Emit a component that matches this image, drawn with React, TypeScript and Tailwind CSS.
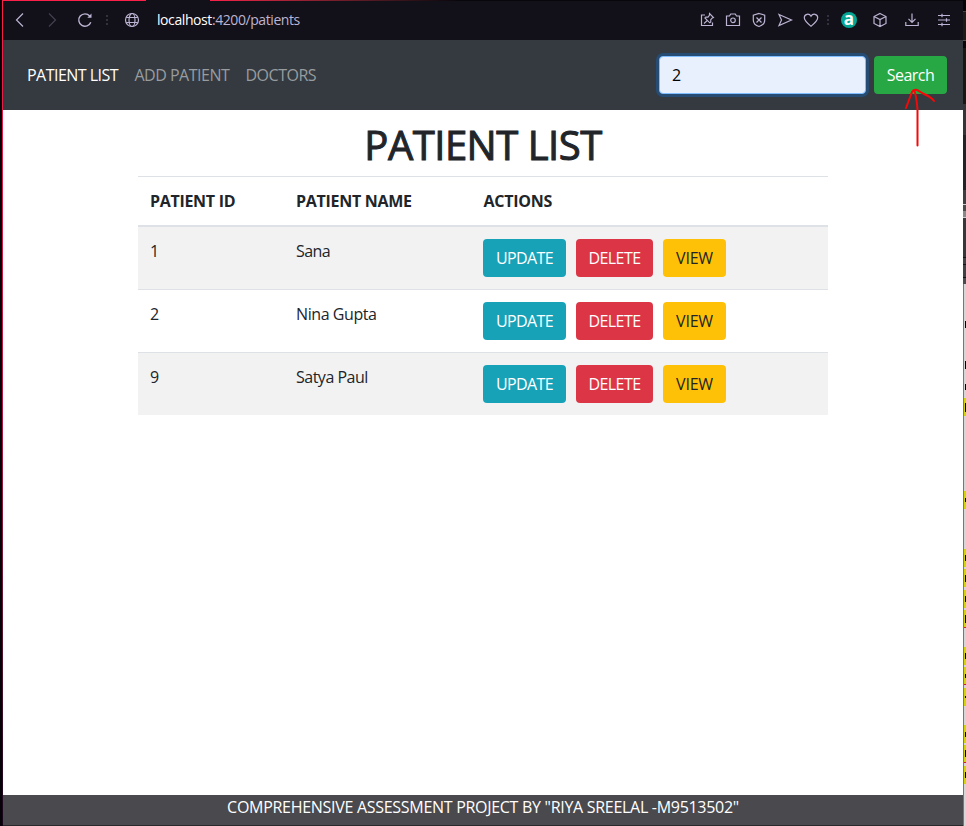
import React from "react";

const patients = [
  { id: "1", name: "Sana", track: "tracking-[-0.6px]" },
  { id: "2", name: "Nina Gupta", track: "tracking-[-0.42px]" },
  { id: "9", name: "Satya Paul", track: "tracking-[-0.5px]" },
];

function Icon({ className, children, w = 16 }: { className?: string; children: React.ReactNode; w?: number }) {
  return (
    <svg width={w} height="16" viewBox={`0 0 ${w} 16`} fill="none" stroke="currentColor" strokeWidth="1.2" className={`shrink-0 ${className ?? ""}`}>
      {children}
    </svg>
  );
}

function Dots({ className }: { className?: string }) {
  return (
    <span className={`flex w-[2px] shrink-0 flex-col gap-[2px] ${className ?? ""}`}>
      <i className="h-[2px] bg-[#34313f]" />
      <i className="h-[2px] bg-[#34313f]" />
      <i className="h-[2px] bg-[#34313f]" />
    </span>
  );
}

function BrowserBar() {
  return (
    <header className="flex h-10 items-center bg-[#121019] text-[#bcb4d2]">
      <Icon className="ml-[9px]"><path d="M11 1.500 4.500 8l6.500 6.500" /></Icon>
      <Icon className="ml-4 text-[#45424f]"><path d="m5 1.500 6.500 6.500L5 14.500" /></Icon>
      <Icon className="ml-[17px]">
        <path d="M13.800 10.200A6.200 6.200 0 1 1 12.700 4" strokeWidth="1.400" />
        <path d="M14.500 1.500v4.200h-4.200z" fill="currentColor" stroke="none" />
      </Icon>
      <Dots className="ml-[13px]" />
      <Icon className="ml-4">
        <circle cx="8" cy="8" r="6.500" />
        <ellipse cx="8" cy="8" rx="3" ry="6.500" />
        <path d="M2.200 5.500h11.600M2.200 10.500h11.600" />
      </Icon>
      <div className="ml-[17px] text-sm leading-5 tracking-[-0.42px] whitespace-nowrap">
        <span className="text-white">localhost</span>:4200/patients
      </div>
      <div className="ml-auto flex items-center">
        <Icon>
          <path d="M6 3H2.500v10.500h11V10.500" />
          <path strokeWidth="1.100" d="m10.500 1.500 4 4-1.200.5-1.600 1.800.1 2.200-1 .8L5.900 6l.9-1 2.200.1 1.400-1.800zM8.300 8.500 5 11.500" />
        </Icon>
        <Icon className="ml-[10px]">
          <path d="M1.500 4h3l1.200-2h4.600l1.200 2h3v9.500h-13z" />
          <circle cx="8" cy="8.300" r="2.300" />
        </Icon>
        <Icon className="ml-[10px]">
          <path d="m8 1.500 5.700 1.700v5C13.700 11.500 11 13.500 8 14.500c-3-1-5.700-3-5.700-6.300v-5z" />
          <path d="m5.500 5.500 5 5m0-5-5 5" />
        </Icon>
        <Icon className="ml-[10px]"><path d="M2 2.500 14.500 8 2 13.500 4.500 8z" /></Icon>
        <Icon className="ml-[10px]">
          <path d="M8 14.300C4.500 11.400 1.300 8.800 1.300 5.800 1.300 1.800 6.200 1 8 4.200c1.800-3.200 6.700-2.400 6.700 1.600C14.700 8.800 11.500 11.400 8 14.300z" />
        </Icon>
        <Dots className="ml-2" />
        <span className="ml-3 flex size-4 shrink-0 items-center justify-center rounded-full bg-[#04a595] pb-[3px] text-[17px] leading-none font-bold text-white">a</span>
        <Icon className="ml-[15px]">
          <path d="m8 1.500 6 3v7l-6 3-6-3v-7zM2 4.500l6 3 6-3M8 7.500v7" />
        </Icon>
        <Icon className="ml-4"><path d="M8 1.500v8.500M4.500 6.800 8 10.300l3.500-3.500M1.800 10v3.500h12.400V10" /></Icon>
        <Icon className="ml-4 mr-[11px]">
          <path d="M2 3.500h12M2 8h12M2 12.500h12M6 1.800v3.400M10.500 6.300v3.400M6 10.800v3.400" />
        </Icon>
      </div>
    </header>
  );
}

function NavBar() {
  return (
    <nav className="relative flex h-[70px] items-center bg-[#343a40] pl-6 pr-4 text-[#999c9f] whitespace-nowrap">
      <a className="w-[107.500px] text-white tracking-[-0.53px]">PATIENT LIST</a>
      <a className="w-[111px] tracking-[-0.5px]">ADD PATIENT</a>
      <a className="tracking-[-0.5px]">DOCTORS</a>
      <input
        readOnly
        value="2"
        className="ml-auto h-[38px] w-[207px] rounded border border-[#80bdff] bg-[#e8f0fe] px-3 text-black shadow-[0_0_0_3px_#264c74] outline-none"
      />
      <button className="ml-2 h-[38px] w-[73px] rounded bg-[#28a745] text-white tracking-[-0.55px]">Search</button>
      <svg className="absolute left-[900px] top-[46px] text-[#f50808]" width="34" height="64" viewBox="0 0 34 64" fill="none" stroke="currentColor" strokeWidth="2" strokeLinecap="round">
        <path d="M14.500 59.500V24C14 16 13 10 11.500 5M3 22 9 6Q10.500 3 14 4L21 8Q28 11 31 15" />
      </svg>
    </nav>
  );
}

function PatientTable() {
  return (
    <div className="mx-[135px] mt-2 border-t border-[#dee2e6]">
      <div className="grid h-[50px] grid-cols-[146px_187px_1fr] border-b-2 border-[#dee2e6] px-3 pt-3 font-bold whitespace-nowrap">
        <span className="tracking-[-0.3px]">PATIENT ID</span>
        <span className="tracking-[-0.28px]">PATIENT NAME</span>
        <span className="pl-[0.5px] tracking-[-0.25px]">ACTIONS</span>
      </div>
      {patients.map((p) => (
        <div key={p.id} className="grid h-[63px] grid-cols-[146px_187px_1fr] border-t border-[#dee2e6] px-3 pt-3 odd:bg-white even:bg-[#f2f2f2] [&:nth-child(2)]:h-[62px] [&:nth-child(2)]:border-t-0">
          <span>{p.id}</span>
          <span className={p.track}>{p.name}</span>
          <div className="flex gap-[10px]">
            <button className="h-[38px] w-[83px] rounded bg-[#17a2b8] text-white tracking-[-0.65px]">UPDATE</button>
            <button className="h-[38px] w-[77px] rounded bg-[#dc3545] text-white tracking-[-0.55px]">DELETE</button>
            <button className="h-[38px] w-[63px] rounded bg-[#ffc107] tracking-[-0.2px]">VIEW</button>
          </div>
        </div>
      ))}
    </div>
  );
}

// Slivers of the document window that sits behind the browser.
const slivers = [
  { h: 11, c: "bg-[#050505]" }, { h: 1, c: "bg-[#45443c]" }, { h: 28, c: "bg-[#1c1b15]" },
  { h: 1, c: "bg-[#5a5548]" }, { h: 7, c: "bg-[#070707]" }, { h: 56, c: "bg-[#181711]" },
  { h: 31, c: "bg-[#343536]" }, { h: 55, c: "bg-[#222324]" }, { h: 14, c: "bg-[#3d3e3f]" },
  { h: 1, c: "bg-[#d0d0d0]" }, { h: 6, c: "bg-[#4a4a4a]" }, { h: 6, c: "bg-[#888]" },
  { h: 1, c: "bg-[#d0d0d0]" }, { h: 39, c: "bg-[#363738]" }, { h: 1, c: "bg-[#151515]" },
  { h: 6, c: "bg-[#404142]" }, { h: 1, c: "bg-[#151515]" }, { h: 12, c: "bg-[#404142]" },
  { h: 1, c: "bg-[#151515]" }, { h: 6, c: "bg-[#4a4b4c]" },
];

// Edges of the letters that show past the browser's right border.
const marks = [
  { box: "top-[315px] items-center", ink: "h-[7px]" },
  { box: "top-[356px] items-center", ink: "h-[8px]" },
  { box: "top-[378px] items-center", ink: "h-[6px]" },
  { box: "top-[398px] items-center bg-[#d5d500]", ink: "h-[9px]" },
  { box: "top-[491px] items-center bg-[#d5d500]", ink: "h-[4px]" },
  { box: "top-[549px] items-center bg-[#d5d500]", ink: "h-[6px]" },
  { box: "top-[569px] items-center bg-[#d5d500]", ink: "h-[7px]" },
  { box: "top-[590px] items-center bg-[#d5d500]", ink: "h-[6px]" },
  { box: "top-[610px] items-center border-b border-[#d02020] bg-[#d5d500]", ink: "h-[8px]" },
  { box: "top-[647px] items-center bg-[#d5d500]", ink: "h-[6px]" },
  { box: "top-[667px] items-center border-b border-[#d02020] bg-[#d5d500]", ink: "h-[4px]" },
  { box: "top-[688px] items-center bg-[#d5d500]", ink: "h-[2px]" },
  { box: "top-[725px] items-center bg-[#d5d500]", ink: "h-[5px]" },
  { box: "top-[745px] items-center border-b border-[#d02020] bg-[#d5d500]", ink: "h-[7px]" },
  { box: "top-[766px] items-center bg-[#d5d500]", ink: "h-[6px]" },
];

function BackgroundWindow() {
  return (
    <aside className="relative h-full w-[3px] shrink-0 overflow-hidden bg-[#d6d6d6]">
      {slivers.map((s, i) => (
        <div key={i} className={s.c} style={{ height: s.h }} />
      ))}
      <div className="absolute left-0 top-[284px] h-[542px] w-px bg-[#777]" />
      {marks.map((m, i) => (
        <span key={i} className={`absolute left-px flex h-[18px] w-[2px] justify-end ${m.box}`}>
          <i className={`w-px bg-black ${m.ink}`} />
        </span>
      ))}
    </aside>
  );
}

export default function App() {
  return (
    <div className="relative flex h-[826px] w-[966px] overflow-hidden bg-black font-['Open_Sans','Noto_Sans',sans-serif] text-base leading-6 text-[#212529]">
      <div className="h-full w-[3px] shrink-0 bg-[#050308] pl-[2px]">
        <div className="h-full bg-linear-to-b from-[#fa2049] via-[#b0153f] to-[#16051a]" />
      </div>
      <div className="flex h-full w-[960px] flex-col bg-white">
        <BrowserBar />
        <NavBar />
        <main className="flex-1">
          <h1 className="mt-[10px] h-12 text-center text-[40px] leading-[50px] tracking-[-0.5px] [-webkit-text-stroke:1px_#212529]">PATIENT LIST</h1>
          <PatientTable />
        </main>
        <footer className="h-[31px] border-b border-[#29292b] bg-[#4a494e] text-center text-white tracking-[-0.29px]">
          COMPREHENSIVE ASSESSMENT PROJECT BY "RIYA SREELAL -M9513502"
        </footer>
      </div>
      <BackgroundWindow />
      <div className="absolute left-[210px] right-[3px] top-0 h-px bg-[#08070c]" />
      <div className="absolute left-[2px] top-0 h-px w-36 bg-[#fa2049]" />
      <div className="absolute left-[210px] top-0 h-px w-[250px] bg-linear-to-r from-[#fa2049] to-[#08070c]" />
    </div>
  );
}
